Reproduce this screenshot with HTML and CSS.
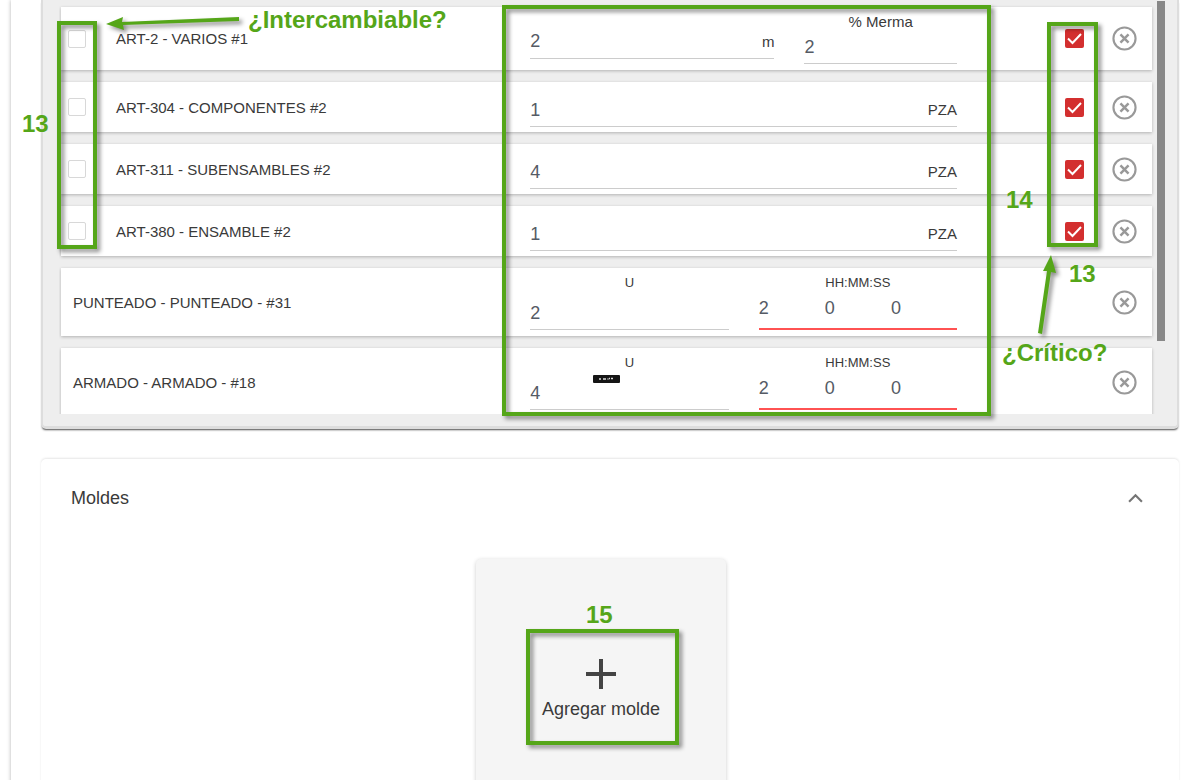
FILE: index.html
```html
<!DOCTYPE html>
<html lang="es">
<head>
    <meta charset="UTF-8">
    <meta name="viewport" content="width=device-width, initial-scale=1.0">
    <title>Ficha de producto - Moldes</title>
    <link rel="stylesheet" href="styles.css">
</head>
<body>

<svg class="symbols" aria-hidden="true">
    <symbol id="icon-close" viewBox="0 0 26 26">
        <circle cx="13" cy="13" r="11.5" fill="none" stroke="#999" stroke-width="2.2"/>
        <path d="M8.8 8.8l8.4 8.4M17.2 8.8l-8.4 8.4" fill="none" stroke="#999" stroke-width="2.6"/>
    </symbol>
</svg>

<main class="page">
    <section class="components">
        <div class="list">
            <div class="row row-tall">
                <div class="row-name">
                    <input type="checkbox" class="check" id="inter-1">
                    <label for="inter-1">ART-2 - VARIOS #1</label>
                </div>
                <div class="fields fields-merma">
                    <div class="field">
                        <div class="control">
                            <input type="text" id="cant-1" value="2" aria-label="Cantidad">
                            <label for="cant-1" class="unit">m</label>
                        </div>
                    </div>
                    <div class="field field-labeled">
                        <label for="merma-1" class="caption">% Merma</label>
                        <div class="control"><input type="text" id="merma-1" value="2"></div>
                    </div>
                </div>
                <div class="row-actions">
                    <input type="checkbox" class="check critical" aria-label="Crítico" checked>
                    <button type="button" class="remove" aria-label="Quitar"><svg><use href="#icon-close"/></svg></button>
                </div>
            </div>

            <div class="row">
                <div class="row-name">
                    <input type="checkbox" class="check" id="inter-2">
                    <label for="inter-2">ART-304 - COMPONENTES #2</label>
                </div>
                <div class="fields">
                    <div class="field">
                        <div class="control">
                            <input type="text" id="cant-2" value="1" aria-label="Cantidad">
                            <label for="cant-2" class="unit">PZA</label>
                        </div>
                    </div>
                </div>
                <div class="row-actions">
                    <input type="checkbox" class="check critical" aria-label="Crítico" checked>
                    <button type="button" class="remove" aria-label="Quitar"><svg><use href="#icon-close"/></svg></button>
                </div>
            </div>

            <div class="row">
                <div class="row-name">
                    <input type="checkbox" class="check" id="inter-3">
                    <label for="inter-3">ART-311 - SUBENSAMBLES #2</label>
                </div>
                <div class="fields">
                    <div class="field">
                        <div class="control">
                            <input type="text" id="cant-3" value="4" aria-label="Cantidad">
                            <label for="cant-3" class="unit">PZA</label>
                        </div>
                    </div>
                </div>
                <div class="row-actions">
                    <input type="checkbox" class="check critical" aria-label="Crítico" checked>
                    <button type="button" class="remove" aria-label="Quitar"><svg><use href="#icon-close"/></svg></button>
                </div>
            </div>

            <div class="row">
                <div class="row-name">
                    <input type="checkbox" class="check" id="inter-4">
                    <label for="inter-4">ART-380 - ENSAMBLE #2</label>
                </div>
                <div class="fields">
                    <div class="field">
                        <div class="control">
                            <input type="text" id="cant-4" value="1" aria-label="Cantidad">
                            <label for="cant-4" class="unit">PZA</label>
                        </div>
                    </div>
                </div>
                <div class="row-actions">
                    <input type="checkbox" class="check critical" aria-label="Crítico" checked>
                    <button type="button" class="remove" aria-label="Quitar"><svg><use href="#icon-close"/></svg></button>
                </div>
            </div>

            <div class="row row-process">
                <div class="row-name">PUNTEADO - PUNTEADO - #31</div>
                <div class="fields fields-process">
                    <div class="field field-labeled">
                        <label for="u-5" class="caption">U</label>
                        <div class="control"><input type="text" id="u-5" value="2"></div>
                    </div>
                    <div class="field field-labeled">
                        <label for="hh-5" class="caption">HH:MM:SS</label>
                        <div class="control control-time">
                            <input type="text" id="hh-5" value="2">
                            <input type="text" value="0" aria-label="Minutos">
                            <input type="text" value="0" aria-label="Segundos">
                        </div>
                    </div>
                </div>
                <div class="row-actions">
                    <button type="button" class="remove" aria-label="Quitar"><svg><use href="#icon-close"/></svg></button>
                </div>
            </div>

            <div class="row row-process">
                <div class="row-name">ARMADO - ARMADO - #18</div>
                <div class="fields fields-process">
                    <div class="field field-labeled">
                        <label for="u-6" class="caption">U</label>
                        <div class="control"><input type="text" id="u-6" value="4"></div>
                    </div>
                    <div class="field field-labeled">
                        <label for="hh-6" class="caption">HH:MM:SS</label>
                        <div class="control control-time">
                            <input type="text" id="hh-6" value="2">
                            <input type="text" value="0" aria-label="Minutos">
                            <input type="text" value="0" aria-label="Segundos">
                        </div>
                    </div>
                </div>
                <div class="row-actions">
                    <button type="button" class="remove" aria-label="Quitar"><svg><use href="#icon-close"/></svg></button>
                </div>
            </div>
        </div>
        <div class="scroll-thumb"></div>
    </section>

    <section class="molds">
        <header class="molds-header">
            <h2>Moldes</h2>
            <button type="button" class="collapse" aria-label="Contraer">
                <svg viewBox="0 0 14 9"><path d="M1 8l6-6 6 6" fill="none" stroke="#757575" stroke-width="2"/></svg>
            </button>
        </header>
        <button type="button" class="add-mold">
            <svg viewBox="0 0 30 30"><path d="M15 0v30M0 15h30" stroke="#444" stroke-width="4"/></svg>
            <span>Agregar molde</span>
        </button>
    </section>
</main>

<!-- Notas del manual sobre la pantalla -->
<div class="notes">
    <div class="box box-inter"></div>
    <div class="box box-fields"></div>
    <div class="box box-critical"></div>
    <div class="box box-add"></div>

    <svg class="arrow arrow-inter" viewBox="0 0 140 20">
        <path d="M4 10L21 3L20 8L137 3L137 7L21 11L22 16Z" fill="#55a619"/>
    </svg>
    <svg class="arrow arrow-critical" viewBox="0 0 24 84">
        <path d="M15 2L20 20L15 19L6 81L2 80L11 18L7 18Z" fill="#55a619"/>
    </svg>

    <span class="note note-inter">¿Intercambiable?</span>
    <span class="note note-13a">13</span>
    <span class="note note-14">14</span>
    <span class="note note-13b">13</span>
    <span class="note note-critical">¿Crítico?</span>
    <span class="note note-15">15</span>

    <svg class="tooltip" viewBox="0 0 27 8">
        <rect width="27" height="8" rx="1" fill="#151515"/>
        <path d="M6 4h2M10 4h3M14.500 4h1M16 3.500h1M18 3.500h2" stroke="#ddd" stroke-width="1.500"/>
    </svg>
</div>

</body>
</html>
```

FILE: styles.css
```css
* {
    box-sizing: border-box;
}
body {
    margin: 0;
    height: 100vh;
    overflow: hidden;
    position: relative;
    background-color: #fff;
    color: #3a3a3a;
    font-family: "Liberation Sans", Arial, sans-serif;
    font-size: 15px;
}
button {
    padding: 0;
    border: none;
    background: none;
    font: inherit;
    color: inherit;
    cursor: pointer;
}
.symbols {
    display: none;
}
.page {
    min-height: 100vh;
    margin-left: 11px;
    padding: 0 4px 0 30px;
    background-color: #fff;
    box-shadow: 0 0 4px rgba(0, 0, 0, 0.3);
}

/* lista de componentes */
.components {
    display: flex;
    padding: 0 12px 12px 16px;
    background-color: #eee;
    border: 2px solid #ddd;
    border-top: none;
    border-bottom-width: 3px;
    border-radius: 0 0 5px 5px;
    box-shadow: 0 2px 2px -1px rgba(0, 0, 0, 0.7);
}
.list {
    flex: 1;
    display: flex;
    flex-direction: column;
    gap: 12px;
    max-height: 414px;
    padding: 7px 5px 0 2px;
    overflow: hidden;
}
.row {
    display: grid;
    grid-template-columns: 11fr 10fr 195px;
    align-items: center;
    flex: none;
    min-height: 50px;
    background-color: #fff;
    box-shadow: 0 1px 3px rgba(0, 0, 0, 0.25);
}
.row-tall {
    min-height: 63px;
}
.row-process {
    min-height: 68px;
}
.row-name {
    display: flex;
    align-items: center;
    gap: 30px;
    padding-left: 7px;
}
.row-process .row-name {
    padding-left: 12px;
}
.check {
    appearance: none;
    width: 18px;
    height: 18px;
    margin: 0;
    border: 1px solid #d8d8d8;
    border-radius: 2px;
    background-color: #fff;
}
.critical {
    width: 19px;
    height: 19px;
}
.critical:checked {
    border: none;
    background: #d32f2f url("data:image/svg+xml,%3Csvg xmlns='http://www.w3.org/2000/svg' viewBox='0 0 19 19'%3E%3Cpath d='M3 9.500l4.500 4.500L16 5' fill='none' stroke='%23fff' stroke-width='2'/%3E%3C/svg%3E");
}
.fields {
    display: grid;
    gap: 30px;
    align-items: center;
}
.fields-merma {
    grid-template-columns: 8fr 5fr;
}
.fields-process {
    grid-template-columns: 1fr 1fr;
}
.field {
    padding-top: 7px;
    min-width: 0;
}
.field-labeled {
    padding-top: 0;
}
.caption {
    display: block;
    line-height: 18px;
    text-align: center;
}
.fields-process .caption {
    font-size: 13px;
}
.control {
    display: flex;
    align-items: center;
    border-bottom: 1px solid #ccc;
}
.fields-process .control {
    padding-top: 5px;
}
.control input {
    flex: 1;
    min-width: 0;
    width: 100%;
    height: 32px;
    padding: 0;
    border: none;
    outline: none;
    background: none;
    color: #555b65;
    font: inherit;
    font-size: 18px;
}
.fields-process .control-time {
    padding: 0 0 4px;
    border-bottom: 2px solid #ff5252;
}
.unit {
    line-height: 18px;
}
.row-actions {
    display: flex;
    align-items: center;
    justify-content: flex-end;
    gap: 28px;
    padding-right: 15px;
}
.remove,
.remove svg {
    display: block;
    width: 25px;
    height: 25px;
}
.scroll-thumb {
    width: 8px;
    height: 340px;
    margin-top: 1px;
    background-color: #888;
}

/* moldes */
.molds {
    margin-top: 30px;
    padding: 0 18px 0 0;
    border-radius: 5px;
    box-shadow: 0 -1px 3px -1px rgba(0, 0, 0, 0.2);
}
.molds-header {
    display: flex;
    align-items: center;
    justify-content: space-between;
    height: 78px;
    padding: 0 18px 0 30px;
}
.molds-header h2 {
    margin: 0;
    font-size: 18px;
    font-weight: normal;
}
.collapse svg {
    display: block;
    width: 15px;
    height: 10px;
}
.add-mold {
    display: flex;
    flex-direction: column;
    align-items: center;
    justify-content: center;
    gap: 10px;
    width: 250px;
    height: 260px;
    margin: 22px auto 0;
    border-radius: 5px;
    background-color: #f5f5f5;
    box-shadow: 0 1px 4px rgba(0, 0, 0, 0.2);
    font-size: 18px;
    line-height: 20px;
}
.add-mold svg {
    width: 30px;
    height: 30px;
}

/* notas superpuestas */
.notes {
    position: absolute;
    inset: 0;
    pointer-events: none;
}
.box,
.arrow,
.note,
.tooltip {
    position: absolute;
}
.box {
    border: 4px solid #55a619;
}
.box,
.arrow {
    filter: drop-shadow(3px 3px 2px rgba(0, 0, 0, 0.45));
}
.box-inter {
    left: 57px;
    top: 21px;
    width: 40px;
    height: 228px;
}
.box-fields {
    left: 502px;
    top: 5px;
    width: 489px;
    height: 411px;
}
.box-critical {
    left: 1047px;
    top: 22px;
    width: 51px;
    height: 225px;
}
.box-add {
    left: 526px;
    top: 629px;
    width: 153px;
    height: 116px;
}
.arrow-inter {
    left: 102px;
    top: 14px;
    width: 140px;
    height: 20px;
}
.arrow-critical {
    left: 1036px;
    top: 253px;
    width: 24px;
    height: 84px;
}
.note {
    color: #55a619;
    font-size: 24px;
    font-weight: bold;
    line-height: 28px;
    white-space: nowrap;
}
.note-inter {
    left: 248px;
    top: 6px;
}
.note-13a {
    left: 22px;
    top: 110px;
}
.note-14 {
    left: 1006px;
    top: 186px;
}
.note-13b {
    left: 1069px;
    top: 260px;
}
.note-critical {
    left: 1002px;
    top: 339px;
}
.note-15 {
    left: 586px;
    top: 601px;
}
.tooltip {
    left: 593px;
    top: 375px;
    width: 27px;
    height: 8px;
}
```
